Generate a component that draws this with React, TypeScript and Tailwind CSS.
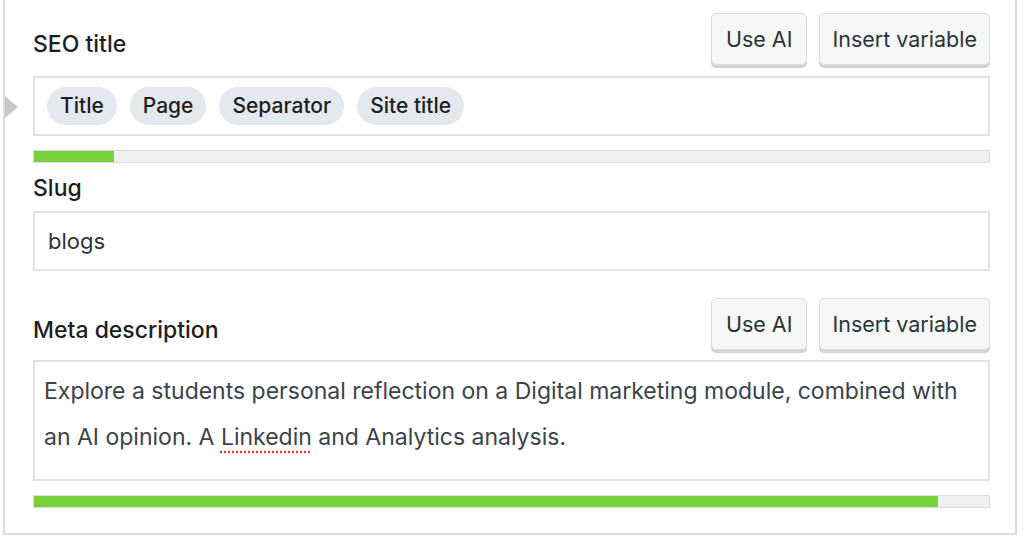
import React from 'react';

const FONT = { fontFamily: 'Inter, "Noto Sans", sans-serif' };

const ActionButtons: React.FC = () => (
  <div className="flex gap-3">
    <button className="h-[52px] rounded-[5px] border border-[#dcdcde] bg-[#f6f7f7] px-[14px] text-[21.5px] text-[#2c3338] shadow-[0_3px_0_#d4d4d6]">
      Use AI
    </button>
    <button className="h-[52px] rounded-[5px] border border-[#dcdcde] bg-[#f6f7f7] px-[12px] text-[21.5px] text-[#2c3338] shadow-[0_3px_0_#d4d4d6]">
      Insert variable
    </button>
  </div>
);

const Progress: React.FC<{ pct: number }> = ({ pct }) => (
  <div className="h-[13px] w-full border border-[#dcdcde] bg-[#f0f0f1]">
    <div className="h-full bg-[#7ad03a]" style={{ width: `${pct}%` }} />
  </div>
);

const CHIPS = ['Title', 'Page', 'Separator', 'Site title'];

export default function App() {
  return (
    <div className="h-[538px] w-[1024px] overflow-hidden bg-white" style={FONT}>
      <div className="ml-[3px] mr-[7px] h-[535px] border-x-2 border-b-2 border-[#dcdcde] pl-[28px] pr-[25px] pt-[13px] text-[#1e1e1e]">
        {/* SEO title */}
        <div className="flex items-start justify-between">
          <label className="mt-[14px] text-[23px] font-medium text-[#1e1e1e]">SEO title</label>
          <ActionButtons />
        </div>
        <div className="relative mt-[11px] flex h-[60px] items-center gap-[13px] border-2 border-[#e2e2e4] px-[12px]">
          <span className="absolute left-[-30px] top-[18px] h-0 w-0 border-y-[11px] border-l-[13px] border-y-transparent border-l-[#c8c8ca]" />
          {CHIPS.map((c) => (
            <span key={c} className="rounded-full bg-[#e4e8ef] px-[13px] py-[3px] text-[21px] font-medium text-[#1e1e1e]">
              {c}
            </span>
          ))}
        </div>
        <div className="mt-[14px]">
          <Progress pct={8.4} />
        </div>

        {/* Slug */}
        <label className="mt-[10px] block text-[23px] font-medium leading-[30px]">Slug</label>
        <div className="mt-[8px] flex h-[60px] items-center border-2 border-[#e2e2e4] px-[13px] text-[22px] text-[#2c3338]">
          blogs
        </div>

        {/* Meta description */}
        <div className="mt-[27px] flex items-start justify-between">
          <label className="mt-[15px] text-[23px] font-medium">Meta description</label>
          <ActionButtons />
        </div>
        <div className="mt-[10px] h-[121px] border-2 border-[#e2e2e4] px-[9px] pt-[6px] text-[23px] leading-[46px] text-[#3c434a]">
          Explore a students personal reflection on a Digital marketing module, combined with
          <br />
          an AI opinion. A{' '}
          <span className="underline decoration-[#d63638] decoration-dotted underline-offset-[6px]">Linkedin</span> and
          Analytics analysis.
        </div>
        <div className="mt-[14px]">
          <Progress pct={94.7} />
        </div>
      </div>
    </div>
  );
}
